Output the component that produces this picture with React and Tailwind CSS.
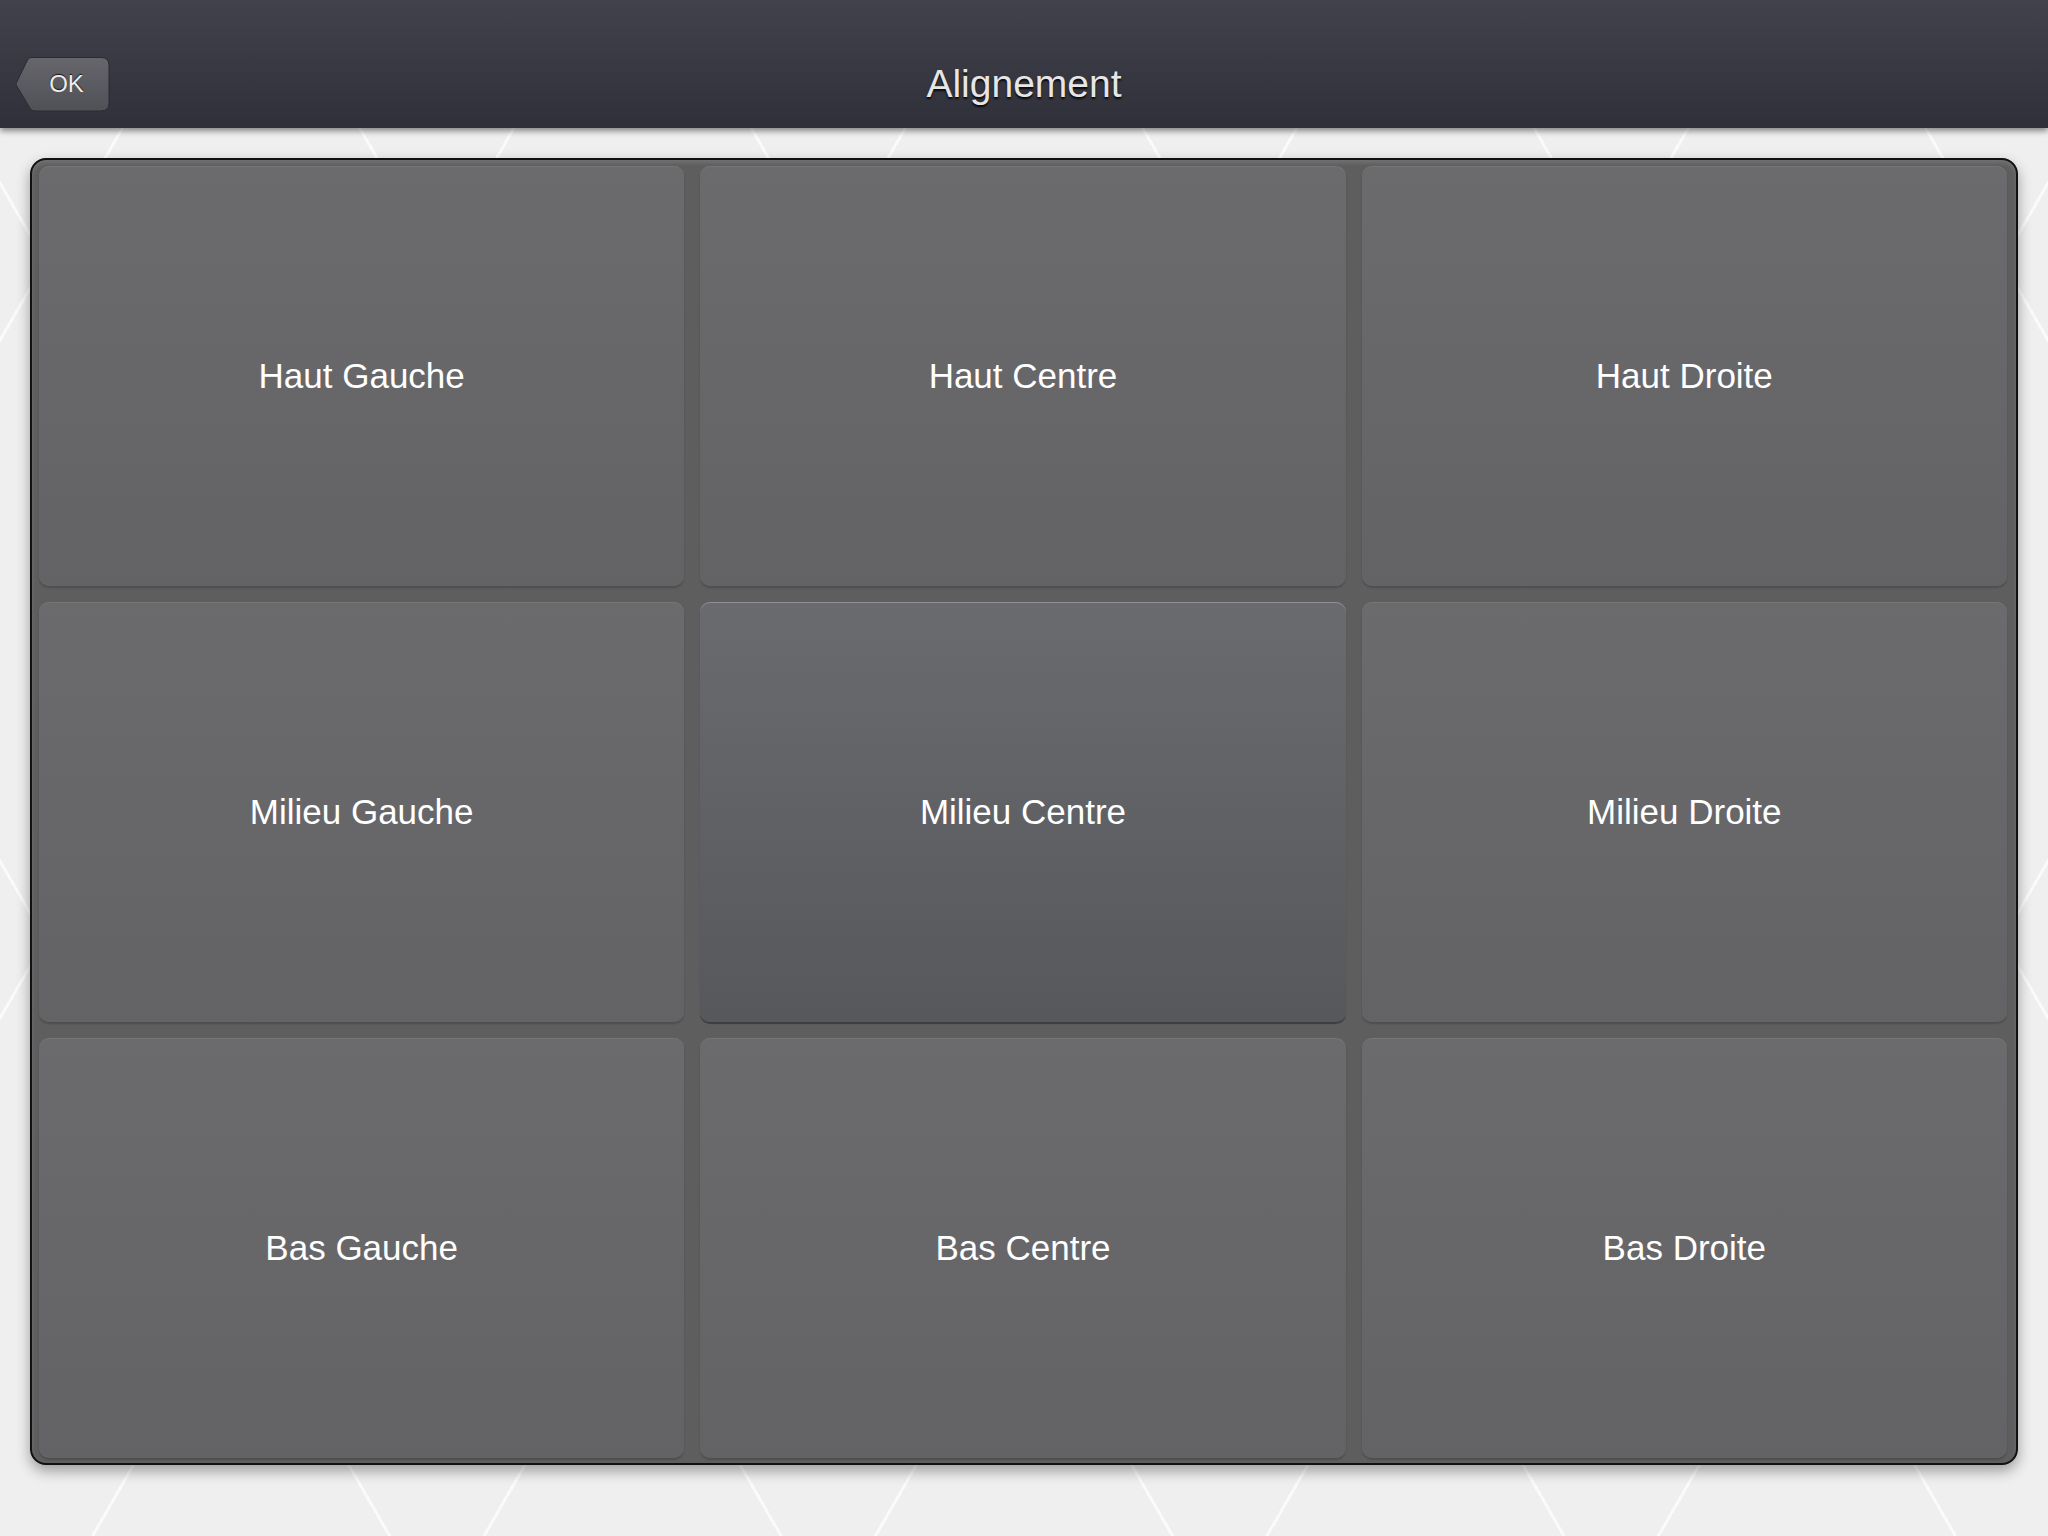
import React from "react";

const cells = [
  "Haut Gauche", "Haut Centre", "Haut Droite",
  "Milieu Gauche", "Milieu Centre", "Milieu Droite",
  "Bas Gauche", "Bas Centre", "Bas Droite",
];

export default function App() {
  return (
    <div
      className="w-[2048px] h-[1536px] flex flex-col bg-[#efefef] bg-[repeating-linear-gradient(60deg,transparent_0px,transparent_336px,rgba(255,255,255,0.7)_336px,rgba(255,255,255,0.7)_339px),repeating-linear-gradient(-60deg,transparent_0px,transparent_336px,rgba(255,255,255,0.7)_336px,rgba(255,255,255,0.7)_339px)] overflow-hidden"
      style={{ fontFamily: "'Liberation Sans', Arial, sans-serif" }}
    >
      <div className="relative z-10 h-[128px] shrink-0 pt-[40px] bg-gradient-to-b from-[#42424c] to-[#30303a] shadow-[0_3px_6px_rgba(0,0,0,0.45)]">
        <div className="relative h-[88px] flex items-center justify-center">
          <button className="absolute left-[15px] top-[16px] w-[95px] h-[56px] flex items-center justify-center">
            <svg className="absolute inset-0" width="95" height="56" viewBox="0 0 95 56">
              <defs>
                <linearGradient id="okg" x1="0" y1="0" x2="0" y2="1">
                  <stop offset="0" stopColor="#66666c" />
                  <stop offset="1" stopColor="#505057" />
                </linearGradient>
              </defs>
              <path
                d="M16 1.5 H86 Q94 1.5 94 9.5 V47 Q94 55 86 55 H20 Q17 55 15.5 53 L1.5 29.5 Q0.5 28 1.5 26.5 L12.5 4 Q14 1.5 16 1.5 Z"
                fill="url(#okg)"
                stroke="#2a2a30"
                strokeWidth="1"
              />
            </svg>
            <span className="relative pl-[8px] text-[24px] text-[#ececec] [text-shadow:0_-1px_1px_rgba(0,0,0,0.8)]">
              OK
            </span>
          </button>
          <h1 className="text-[39px] text-[#e6e6e6] [text-shadow:0_2px_2px_rgba(0,0,0,0.85)]">
            Alignement
          </h1>
        </div>
      </div>

      <div className="flex-1 pt-[30px] pl-[30px]">
        <div className="w-[1988px] h-[1307px] rounded-[16px] border-2 border-[#111] bg-[#5e5e5f] shadow-[0_6px_14px_rgba(0,0,0,0.35),inset_0_3px_4px_rgba(255,255,255,0.12)] pl-[7px] pr-[9px] pt-[6px] pb-[5px]">
          <div className="h-full grid grid-cols-3 grid-rows-3 gap-[16px]">
            {cells.map((c, i) =>
              i === 4 ? (
                <div
                  key={c}
                  className="rounded-[10px] bg-gradient-to-b from-[#6a6b6f] to-[#57585c] shadow-[inset_0_1px_0_rgba(255,255,255,0.25),0_2px_1px_rgba(0,0,0,0.35)] flex items-center justify-center"
                >
                  <span className="text-[35px] text-white">{c}</span>
                </div>
              ) : (
                <div
                  key={c}
                  className="rounded-[10px] bg-gradient-to-b from-[#6b6b6d] to-[#636365] shadow-[inset_0_1px_0_rgba(255,255,255,0.08),0_2px_2px_rgba(0,0,0,0.18)] flex items-center justify-center"
                >
                  <span className="text-[35px] text-white">{c}</span>
                </div>
              )
            )}
          </div>
        </div>
      </div>
    </div>
  );
}
